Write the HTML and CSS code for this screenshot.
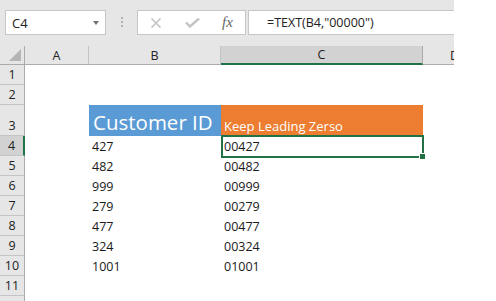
FILE: index.html
```html
<!DOCTYPE html>
<html lang="en">
  <head>
    <meta charset="utf-8">
    <title>Keep Leading Zeros</title>
    <link rel="stylesheet" href="styles.css">
  </head>
  <body>
    <div class="window">
      <div class="formula-bar">
        <div class="name-box">
          <span>C4</span>
          <span class="caret"></span>
        </div>
        <div class="grip"><i></i><i></i><i></i></div>
        <div class="fx-box">
          <svg class="icon-x" width="12" height="10" viewBox="0 0 12 10">
            <path d="M1.5 0.5 L10.5 9.5 M10.5 0.5 L1.5 9.5" stroke="#c3c3c3" stroke-width="1.6" fill="none"/>
          </svg>
          <svg class="icon-check" width="15" height="10" viewBox="0 0 15 10">
            <path d="M1 4.5 L5 8.5 L14 0.5" stroke="#c3c3c3" stroke-width="2.4" fill="none"/>
          </svg>
          <span class="fx">fx</span>
        </div>
        <div class="formula">=TEXT(B4,"00000")</div>
      </div>

      <div class="sheet">
        <div class="row head-row">
          <div class="corner"><span></span></div>
          <div class="col-head">A</div>
          <div class="col-head">B</div>
          <div class="col-head active">C</div>
          <div class="col-head">D</div>
        </div>

        <div class="row">
          <div class="row-head">1</div>
          <div class="cell"></div><div class="cell"></div><div class="cell"></div><div class="cell"></div>
        </div>
        <div class="row">
          <div class="row-head">2</div>
          <div class="cell"></div><div class="cell"></div><div class="cell"></div><div class="cell"></div>
        </div>
        <div class="row tall">
          <div class="row-head">3</div>
          <div class="cell"></div>
          <div class="cell title">Customer ID</div>
          <div class="cell subtitle">Keep Leading Zerso</div>
          <div class="cell"></div>
        </div>
        <div class="row">
          <div class="row-head active">4</div>
          <div class="cell"></div>
          <div class="cell">427</div>
          <div class="cell selected">00427</div>
          <div class="cell"></div>
        </div>
        <div class="row">
          <div class="row-head">5</div>
          <div class="cell"></div><div class="cell">482</div><div class="cell">00482</div><div class="cell"></div>
        </div>
        <div class="row">
          <div class="row-head">6</div>
          <div class="cell"></div><div class="cell">999</div><div class="cell">00999</div><div class="cell"></div>
        </div>
        <div class="row">
          <div class="row-head">7</div>
          <div class="cell"></div><div class="cell">279</div><div class="cell">00279</div><div class="cell"></div>
        </div>
        <div class="row">
          <div class="row-head">8</div>
          <div class="cell"></div><div class="cell">477</div><div class="cell">00477</div><div class="cell"></div>
        </div>
        <div class="row">
          <div class="row-head">9</div>
          <div class="cell"></div><div class="cell">324</div><div class="cell">00324</div><div class="cell"></div>
        </div>
        <div class="row">
          <div class="row-head">10</div>
          <div class="cell"></div><div class="cell">1001</div><div class="cell">01001</div><div class="cell"></div>
        </div>
        <div class="row">
          <div class="row-head">11</div>
          <div class="cell"></div><div class="cell"></div><div class="cell"></div><div class="cell"></div>
        </div>
        <div class="row">
          <div class="row-head"></div>
          <div class="cell"></div><div class="cell"></div><div class="cell"></div><div class="cell"></div>
        </div>
      </div>
    </div>
  </body>
</html>
```
FILE: styles.css
```css
body {
  margin: 0;
  background: #fff;
  font-family: "Open Sans", sans-serif;
  color: #1a1a1a;
}

.window {
  width: 454px;
  height: 301px;
  overflow: hidden;
  background: #fff;
}

.formula-bar {
  display: flex;
  align-items: flex-start;
  height: 46px;
  padding: 10px 0 0 5px;
  box-sizing: border-box;
  background: #e6e6e6;
}

.name-box {
  display: flex;
  align-items: center;
  width: 101px;
  height: 25px;
  box-sizing: border-box;
  border: 1px solid #c6c6c6;
  background: #fff;
  padding-left: 6px;
  font-size: 13px;
  color: #222;
}

.caret {
  margin-left: auto;
  margin-right: 6px;
  width: 0;
  height: 0;
  border-top: 4px solid #707070;
  border-left: 3.5px solid transparent;
  border-right: 3.5px solid transparent;
}

.grip {
  display: flex;
  flex-direction: column;
  gap: 2px;
  margin: 7px 0 0 15px;
}

.grip i {
  width: 2px;
  height: 2px;
  background: #b0b0b0;
}

.fx-box {
  display: flex;
  align-items: center;
  width: 109px;
  height: 25px;
  box-sizing: border-box;
  margin-left: 14px;
  border: 1px solid #c6c6c6;
  background: #fff;
  padding-left: 12px;
}

.icon-check {
  margin-left: 23px;
}

.fx {
  margin-left: 22px;
  font-family: "Liberation Serif", serif;
  font-style: italic;
  font-size: 15px;
  color: #666;
}

.formula {
  flex: 1;
  height: 25px;
  box-sizing: border-box;
  margin-left: 2px;
  border: 1px solid #c6c6c6;
  border-right: none;
  background: #fff;
  padding-left: 18px;
  font-size: 12.5px;
  line-height: 23px;
  color: #222;
}

.row {
  display: grid;
  grid-template-columns: 25px 64px 132px 202px 64px;
  height: 20px;
}

.row.tall {
  height: 31px;
}

.head-row {
  height: 19px;
}

.corner {
  display: flex;
  align-items: flex-end;
  justify-content: flex-end;
  padding: 0 3px 3px 0;
  background: #e6e6e6;
  border-right: 1px solid #ababab;
  border-bottom: 1px solid #ababab;
}

.corner span {
  width: 0;
  height: 0;
  border-left: 12px solid transparent;
  border-bottom: 12px solid #b4b4b4;
}

.col-head {
  display: flex;
  align-items: center;
  justify-content: center;
  background: #e6e6e6;
  border-right: 1px solid #c4c4c4;
  border-bottom: 1px solid #ababab;
  font-size: 12.5px;
  color: #222;
}

.col-head.active {
  background: #d2d2d2;
  border-right-color: #ababab;
  border-bottom: 2px solid #217346;
}

.row-head {
  display: flex;
  align-items: flex-end;
  justify-content: center;
  padding-bottom: 2px;
  background: #e6e6e6;
  border-right: 1px solid #ababab;
  border-bottom: 1px solid #c4c4c4;
  font-size: 12.5px;
  line-height: 15px;
  color: #222;
}

.row-head.active {
  background: #d2d2d2;
  border-right: 2px solid #217346;
}

.cell {
  display: flex;
  align-items: flex-end;
  padding: 0 0 2px 3px;
  font-size: 12.5px;
  line-height: 15px;
  white-space: nowrap;
}

.cell.title {
  padding-left: 4px;
  padding-bottom: 1px;
  background: #5b9bd5;
  color: #fff;
  font-size: 20.5px;
  line-height: 26px;
}

.cell.subtitle {
  padding-bottom: 2px;
  background: #ed7d31;
  color: #fff;
  font-size: 13px;
}

.cell.selected {
  position: relative;
}

.cell.selected::before {
  content: "";
  position: absolute;
  top: -1px;
  left: 0;
  right: -1px;
  bottom: -2px;
  border: 2px solid #217346;
}

.cell.selected::after {
  content: "";
  position: absolute;
  right: -2px;
  bottom: -3px;
  width: 5px;
  height: 5px;
  background: #217346;
  border-left: 1px solid #fff;
  border-top: 1px solid #fff;
}
```
